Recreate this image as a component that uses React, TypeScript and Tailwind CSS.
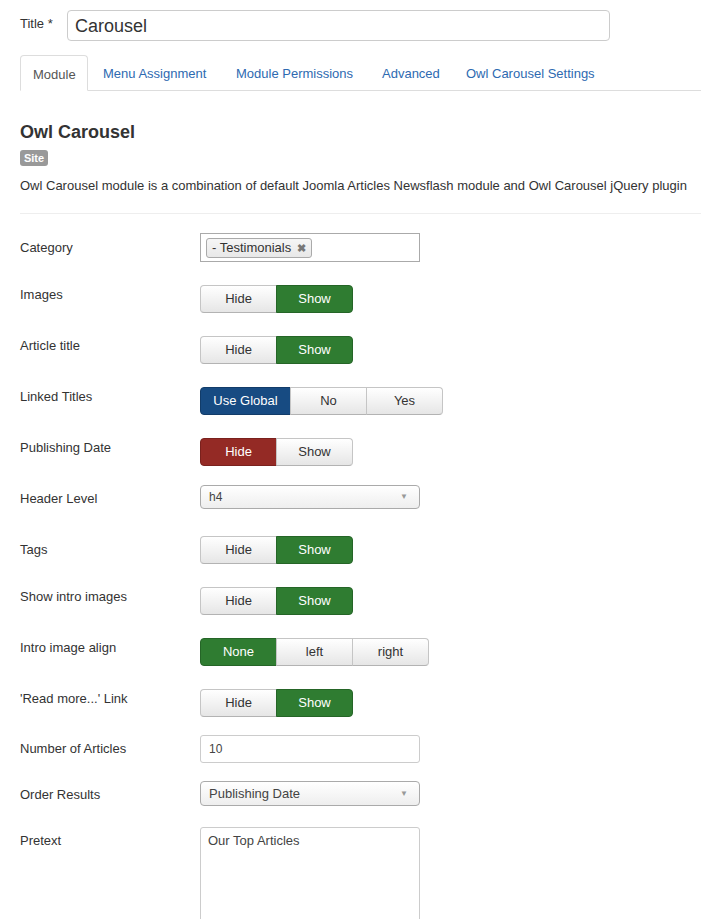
import React from "react";

type Opt = { label: string; active?: "green" | "blue" | "red"; w: string };

const activeBg: Record<string, string> = {
  green: "bg-[#2f7c31] text-white border-[#256527]",
  blue: "bg-[#174b82] text-white border-[#123c69]",
  red: "bg-[#942a25] text-white border-[#7a211d]",
};

const BtnGroup = ({ opts }: { opts: Opt[] }) => (
  <div className="flex">
    {opts.map((o, i) => (
      <div
        key={o.label}
        className={`${o.w} h-[28px] flex items-center justify-center text-[13px] border ${
          i === 0 ? "rounded-l-[4px]" : "-ml-px"
        } ${i === opts.length - 1 ? "rounded-r-[4px]" : ""} ${
          o.active
            ? activeBg[o.active]
            : "bg-gradient-to-b from-white to-[#e6e6e6] text-[#333] border-[#c5c5c5] border-b-[#b3b3b3]"
        }`}
      >
        {o.label}
      </div>
    ))}
  </div>
);

const HideShow = ({ on }: { on: "hide" | "show" }) => (
  <BtnGroup
    opts={[
      { label: "Hide", w: "w-[77px]", active: on === "hide" ? "red" : undefined },
      { label: "Show", w: "w-[77px]", active: on === "show" ? "green" : undefined },
    ]}
  />
);

const Select = ({ value, h, text }: { value: string; h: string; text: string }) => (
  <div
    className={`w-[220px] ${h} flex items-center justify-between pl-[8px] pr-[11px] rounded-[4px] border border-[#aaa] bg-gradient-to-b from-white to-[#eee] ${text} text-[#444]`}
  >
    <span>{value}</span>
    <span className="text-[8px] text-[#999]">▼</span>
  </div>
);

const rows: { label: string; gap: string; pt: string; control: React.ReactNode }[] = [
  {
    label: "Category",
    gap: "mt-[19px]",
    pt: "pt-[6px]",
    control: (
      <div className="w-[220px] h-[29px] border border-[#aaa] bg-white flex items-center px-[5px]">
        <div className="h-[20px] flex items-center gap-[6px] pl-[5px] pr-[5px] rounded-[3px] border border-[#aaa] bg-gradient-to-b from-[#f6f6f6] to-[#e8e8e8] text-[13px] text-[#333]">
          <span>- Testimonials</span>
          <span className="text-[11px] text-[#777] font-bold">✖</span>
        </div>
      </div>
    ),
  },
  { label: "Images", gap: "mt-[23px]", pt: "pt-[1px]", control: <HideShow on="show" /> },
  { label: "Article title", gap: "mt-[23px]", pt: "pt-[1px]", control: <HideShow on="show" /> },
  {
    label: "Linked Titles",
    gap: "mt-[23px]",
    pt: "pt-[1px]",
    control: (
      <BtnGroup
        opts={[
          { label: "Use Global", w: "w-[91px]", active: "blue" },
          { label: "No", w: "w-[77px]" },
          { label: "Yes", w: "w-[77px]" },
        ]}
      />
    ),
  },
  { label: "Publishing Date", gap: "mt-[23px]", pt: "pt-[1px]", control: <HideShow on="hide" /> },
  {
    label: "Header Level",
    gap: "mt-[19px]",
    pt: "pt-[5px]",
    control: <Select value="h4" h="h-[24px]" text="text-[12px]" />,
  },
  { label: "Tags", gap: "mt-[27px]", pt: "pt-[5px]", control: <HideShow on="show" /> },
  { label: "Show intro images", gap: "mt-[23px]", pt: "pt-[1px]", control: <HideShow on="show" /> },
  {
    label: "Intro image align",
    gap: "mt-[23px]",
    pt: "pt-[1px]",
    control: (
      <BtnGroup
        opts={[
          { label: "None", w: "w-[77px]", active: "green" },
          { label: "left", w: "w-[77px]" },
          { label: "right", w: "w-[77px]" },
        ]}
      />
    ),
  },
  { label: "'Read more...' Link", gap: "mt-[23px]", pt: "pt-[1px]", control: <HideShow on="show" /> },
  {
    label: "Number of Articles",
    gap: "mt-[18px]",
    pt: "pt-[5px]",
    control: (
      <div className="w-[220px] h-[28px] border border-[#ccc] rounded-[3px] bg-white flex items-center px-[8px] text-[12px] text-[#444]">
        10
      </div>
    ),
  },
  {
    label: "Order Results",
    gap: "mt-[18px]",
    pt: "pt-[5px]",
    control: <Select value="Publishing Date" h="h-[25px]" text="text-[13px]" />,
  },
  {
    label: "Pretext",
    gap: "mt-[21px]",
    pt: "pt-[5px]",
    control: (
      <div className="w-[220px] h-[110px] border border-[#ccc] rounded-[3px] bg-white px-[7px] pt-[4px] text-[13px] leading-[18px] text-[#444]">
        Our Top Articles
      </div>
    ),
  },
];

const tabs: { label: string; w: string }[] = [
  { label: "Module", w: "w-[68px]" },
  { label: "Menu Assignment", w: "w-[130px]" },
  { label: "Module Permissions", w: "w-[143px]" },
  { label: "Advanced", w: "w-[81px]" },
  { label: "Owl Carousel Settings", w: "" },
];

export default function App() {
  return (
    <div className="w-[701px] h-[919px] overflow-hidden bg-white pl-[20px] text-[#333] font-['Liberation_Sans',Arial,sans-serif] text-[13px] leading-[18px]">
      <div className="flex items-start pt-[10px]">
        <div className="w-[47px] pt-[5px]">Title *</div>
        <div className="w-[543px] h-[31px] border border-[#ccc] rounded-[4px] flex items-center px-[7px] text-[18px] text-[#333]">
          Carousel
        </div>
      </div>

      <div className="mt-[14px] h-[36px] flex items-end border-b border-[#ddd]">
        {tabs.map((t, i) => (
          <div
            key={t.label}
            className={`${t.w} h-[36px] flex items-center pt-[3px] pl-[12px] mr-[3px] ${
              i === 0
                ? "border border-[#ddd] border-b-white rounded-t-[4px] bg-white text-[#555] -mb-px"
                : "text-[#2e6ab1]"
            }`}
          >
            {t.label}
          </div>
        ))}
      </div>

      <h2 className="mt-[30px] text-[18px] leading-[22px] font-bold text-[#333]">Owl Carousel</h2>
      <div className="mt-[7px] w-[28px] h-[16px] rounded-[3px] bg-[#999] text-white text-[11px] font-bold flex items-center justify-center">
        Site
      </div>
      <p className="mt-[11px]">
        Owl Carousel module is a combination of default Joomla Articles Newsflash module and Owl Carousel jQuery plugin
      </p>
      <div className="mt-[18px] h-px bg-[#eee]" />

      {rows.map((r) => (
        <div key={r.label} className={`flex items-start ${r.gap}`}>
          <div className={`w-[180px] ${r.pt}`}>{r.label}</div>
          {r.control}
        </div>
      ))}
    </div>
  );
}
